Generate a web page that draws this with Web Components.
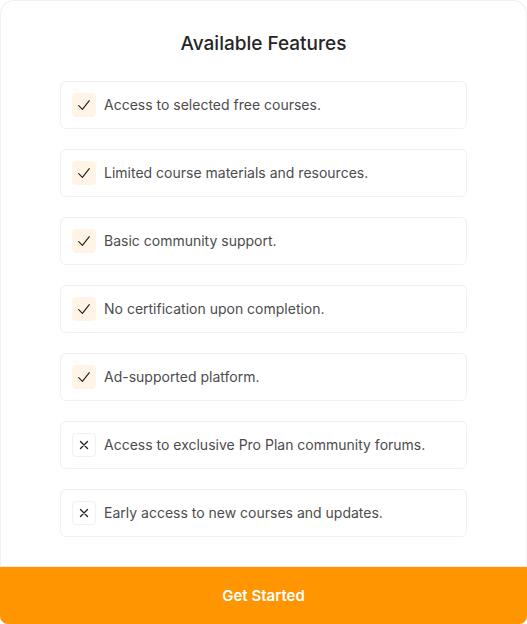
<!DOCTYPE html>
<html lang="en">
<head>
<meta charset="utf-8">
<meta name="viewport" content="width=device-width, initial-scale=1">
<title>Available Features</title>
<style>
body { margin: 0; background: #fff; font-family: Inter, "Liberation Sans", sans-serif; }
</style>
</head>
<body>
<plan-card>
  <span slot="title">Available Features</span>
  <feature-item included>Access to selected free courses.</feature-item>
  <feature-item included>Limited course materials and resources.</feature-item>
  <feature-item included>Basic community support.</feature-item>
  <feature-item included>No certification upon completion.</feature-item>
  <feature-item included>Ad-supported platform.</feature-item>
  <feature-item>Access to exclusive Pro Plan community forums.</feature-item>
  <feature-item>Early access to new courses and updates.</feature-item>
  <span slot="action">Get Started</span>
</plan-card>

<template id="card-template">
  <style>
    :host { display: block; }
    section { box-sizing: border-box; display: flex; flex-direction: column; min-height: 100vh; background: #fff; border: 1px solid #f1f1f3; border-bottom: 0; border-radius: 14px 14px 8px 8px; }
    .content { flex: 1; display: flex; flex-direction: column; padding: 29px 59px; border-bottom: 1px solid #f1f1f3; }
    h2 { margin: 0 0 24px; font-size: 19px; line-height: 27px; font-weight: 500; color: #262626; text-align: center; }
    .list { display: flex; flex-direction: column; gap: 20px; }
    button { margin: 0 -1px; height: 57px; border: 0; border-radius: 0 0 8px 8px; background: #ff9500; color: #fff; font: 600 15px/21px Inter, "Liberation Sans", sans-serif; cursor: pointer; }
  </style>
  <section>
    <div class="content">
      <h2><slot name="title"></slot></h2>
      <div class="list" role="list"><slot></slot></div>
    </div>
    <button type="button"><slot name="action"></slot></button>
  </section>
</template>

<template id="item-template">
  <style>
    :host { box-sizing: border-box; display: flex; align-items: center; gap: 8px; padding: 11px; border: 1px solid #f1f1f3; border-radius: 6px; color: #4c4c4d; font-size: 14px; line-height: 20px; }
    .icon { box-sizing: border-box; flex: none; display: grid; place-items: center; width: 24px; height: 24px; border: 1px solid #f1f1f3; border-radius: 4px; }
    :host([included]) .icon { background: #fff4e5; border-color: #fff4e5; }
    svg { display: none; width: 16px; height: 16px; fill: none; stroke: #262626; stroke-linecap: round; stroke-linejoin: round; }
    :host([included]) .check, :host(:not([included])) .cross { display: block; }
  </style>
  <span class="icon">
    <svg class="check" viewBox="0 0 16 16" stroke-width="1.2" aria-hidden="true"><path d="M2.7 8.7 6.4 12.4 13.3 3.6"/></svg>
    <svg class="cross" viewBox="0 0 16 16" stroke-width="1.4" aria-hidden="true"><path d="M4.5 4.5 11.5 11.5M11.5 4.5 4.5 11.5"/></svg>
  </span>
  <span><slot></slot></span>
</template>

<script>
class PlanCard extends HTMLElement {
  constructor() {
    super();
    this.attachShadow({ mode: "open" }).append(document.getElementById("card-template").content.cloneNode(true));
  }
}
class FeatureItem extends HTMLElement {
  constructor() {
    super();
    this.attachShadow({ mode: "open" }).append(document.getElementById("item-template").content.cloneNode(true));
  }
  connectedCallback() {
    this.setAttribute("role", "listitem");
  }
}
customElements.define("plan-card", PlanCard);
customElements.define("feature-item", FeatureItem);
</script>
</body>
</html>
